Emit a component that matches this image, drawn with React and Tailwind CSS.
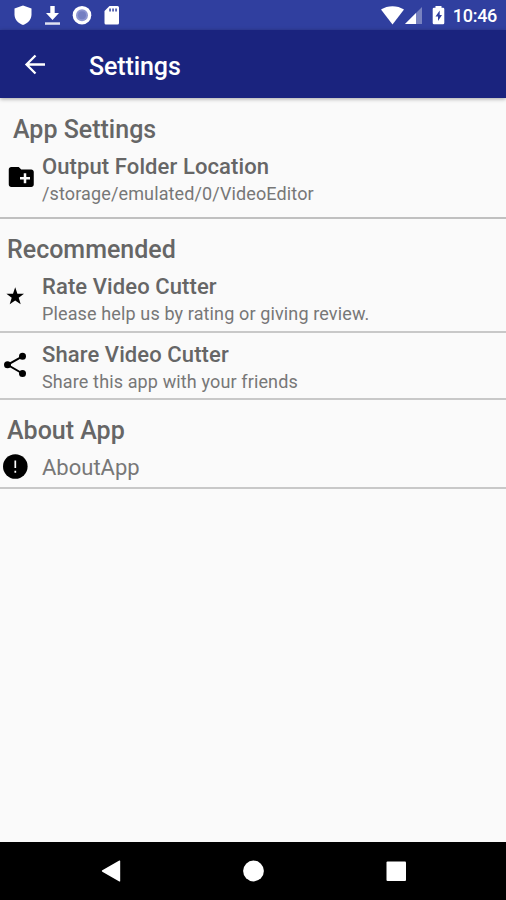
import React from "react";

const FolderIcon = () => (
  <svg className="w-[30px] h-[30px]" viewBox="0 0 24 24" fill="#000">
    <path d="M20.200 6h-8l-2-2H4.200c-1.110 0-1.990.89-1.990 2v12c0 1.110.89 2 2 2h16c1.110 0 2-.89 2-2V8c0-1.110-.89-2-2-2zm-1 8h-3v3h-2v-3h-3v-2h3V9h2v3h3v2z" />
  </svg>
);

const StarIcon = () => (
  <svg className="w-[30px] h-[30px]" viewBox="0 0 30 30" fill="#000">
    <path d="M15.200 5.300l2.200 6.400h6.600l-5.300 4.100 2 6.500-5.500-3.900L9.700 22.300l2-6.500-5.300-4.100H13z" />
  </svg>
);

const ShareIcon = () => (
  <svg className="w-[30px] h-[30px]" viewBox="0 0 30 30">
    <path d="M22.500 6.300L7.500 14.800l15 8.700" fill="none" stroke="#000" strokeWidth="2" />
    <circle cx="22.500" cy="6.300" r="3.500" />
    <circle cx="7.500" cy="14.800" r="3.500" />
    <circle cx="22.500" cy="23.500" r="3.500" />
  </svg>
);

const AboutIcon = () => (
  <svg className="w-[30px] h-[30px]" viewBox="0 0 30 30">
    <circle cx="15.300" cy="14.500" r="12.300" fill="#000" />
    <path d="M15.300 8.500V16M15.300 18.800v2" stroke="#fff" strokeWidth="1.700" />
  </svg>
);

const StatusBar = () => (
  <div className="h-[30px] bg-[#303f9f] flex items-center justify-between">
    <svg className="w-[130px] h-[30px]" viewBox="0 0 130 30" fill="#fff">
      <path d="M23 5.500l8.500 3v6c0 5-3.500 8.700-8.500 10.500-5-1.800-8.500-5.500-8.500-10.500v-6z" />
      <path d="M50.300 6h4.400v7h4.300l-6.500 7-6.500-7h4.300z" />
      <path d="M45 22.300h15v2.500H45z" fillOpacity=".85" />
      <circle cx="82" cy="15.200" r="9.300" />
      <circle cx="82" cy="15.200" r="6" fill="#8d96d0" />
      <circle cx="82" cy="15.200" r="4" fill="#747fc2" />
      <path
        fillRule="evenodd"
        d="M109.500 6h8a1.500 1.500 0 011.500 1.500v15.500a1.500 1.500 0 01-1.500 1.500h-11.500a1.500 1.500 0 01-1.500-1.500V11zM109.300 8.500v3h1.500v-3zM112.300 8.500v3h1.500v-3zM115.300 8.500v3h1.500v-3z"
      />
    </svg>
    <div className="flex items-center pr-[9px]">
      <svg className="w-[72px] h-[30px]" viewBox="0 0 72 30" fill="#fff">
        <path d="M0 9.500C6.500 5 16.500 5 23 9.500L11.500 24.500z" />
        <path d="M41 7v17H24z" fillOpacity=".35" />
        <path d="M35 13v11H24z" />
        <path
          fillRule="evenodd"
          d="M54.500 6h6v1.800h1.500a1.300 1.300 0 011.300 1.300V23a1.300 1.300 0 01-1.300 1.300h-9a1.300 1.300 0 01-1.300-1.300V9.100a1.300 1.300 0 011.300-1.300h1.500zM58.700 10.500l-4.200 6h2.500v4.500l4-6h-2.300z"
        />
      </svg>
      <span className="text-[18px] leading-[30px] font-medium text-white tracking-[-0.3px] pt-[2px]">
        10:46
      </span>
    </div>
  </div>
);

const SettingItem = ({ icon, title, subtitle }) => (
  <div className="flex items-start">
    <div className="w-[42px] pt-[9px] shrink-0">{icon}</div>
    <div>
      <p className="text-[22px] leading-[28px] font-medium tracking-[0.1px]">
        {title}
      </p>
      <p className="text-[18px] leading-[26px] tracking-[0.13px] text-[#777777]">
        {subtitle}
      </p>
    </div>
  </div>
);

const App = () => {
  return (
    <div className="w-full h-[900px] flex flex-col bg-[#fafafa] font-['Roboto',sans-serif] text-[#666666] overflow-hidden whitespace-nowrap">
      <StatusBar />
      <header className="h-[68px] bg-[#1a237e] flex items-center shadow-[0_1px_4px_rgba(0,0,0,0.35)] shrink-0">
        <svg className="w-[22px] h-[22px] ml-[24px]" viewBox="0 0 22 22">
          <path
            d="M21 11.500H3M11.500 2.500L2.500 11.500l9 9"
            fill="none"
            stroke="#fff"
            strokeWidth="2.300"
          />
        </svg>
        <h1 className="ml-[43px] pt-[5px] text-[25px] font-medium text-white tracking-[-0.1px]">
          Settings
        </h1>
      </header>

      <main className="flex-1">
        <section className="h-[121px] pt-[17px] border-b-2 border-[#c0c0c0]">
          <h2 className="pl-[13px] mb-[8px] text-[25px] leading-[30px] font-medium">
            App Settings
          </h2>
          <SettingItem
            icon={<div className="pl-[6px]"><FolderIcon /></div>}
            title="Output Folder Location"
            subtitle="/storage/emulated/0/VideoEditor"
          />
        </section>
        <section className="h-[114px] pt-[16px] border-b-2 border-[#c8c8c8]">
          <h2 className="pl-[7px] mb-[8px] text-[25px] leading-[30px] font-medium">
            Recommended
          </h2>
          <SettingItem
            icon={<StarIcon />}
            title="Rate Video Cutter"
            subtitle="Please help us by rating or giving review."
          />
        </section>
        <section className="h-[67px] pt-[8px] border-b-2 border-[#c8c8c8]">
          <SettingItem
            icon={<ShareIcon />}
            title="Share Video Cutter"
            subtitle="Share this app with your friends"
          />
        </section>
        <section className="h-[89px] pt-[16px] border-b-2 border-[#c8c8c8]">
          <h2 className="pl-[7px] mb-[5px] text-[25px] leading-[30px] font-medium">
            About App
          </h2>
          <div className="flex items-center">
            <div className="w-[42px]">
              <AboutIcon />
            </div>
            <p className="pt-[2px] text-[22px] leading-[30px] text-[#777777]">
              AboutApp
            </p>
          </div>
        </section>
      </main>

      <nav className="h-[58px] bg-black shrink-0">
        <svg className="w-full h-[58px]" viewBox="0 0 506 58" fill="#fff">
          <path d="M102.300 28.300L119.300 18.500c.5-.3.900 0 .9.500v20c0 .500-.400.800-.900.500L102.300 29.700c-.600-.400-.600-1 0-1.400z" />
          <circle cx="253.500" cy="29" r="10.400" />
          <rect x="386.500" y="19.500" width="19.500" height="19.500" rx="1" />
        </svg>
      </nav>
    </div>
  );
};

export default App;
